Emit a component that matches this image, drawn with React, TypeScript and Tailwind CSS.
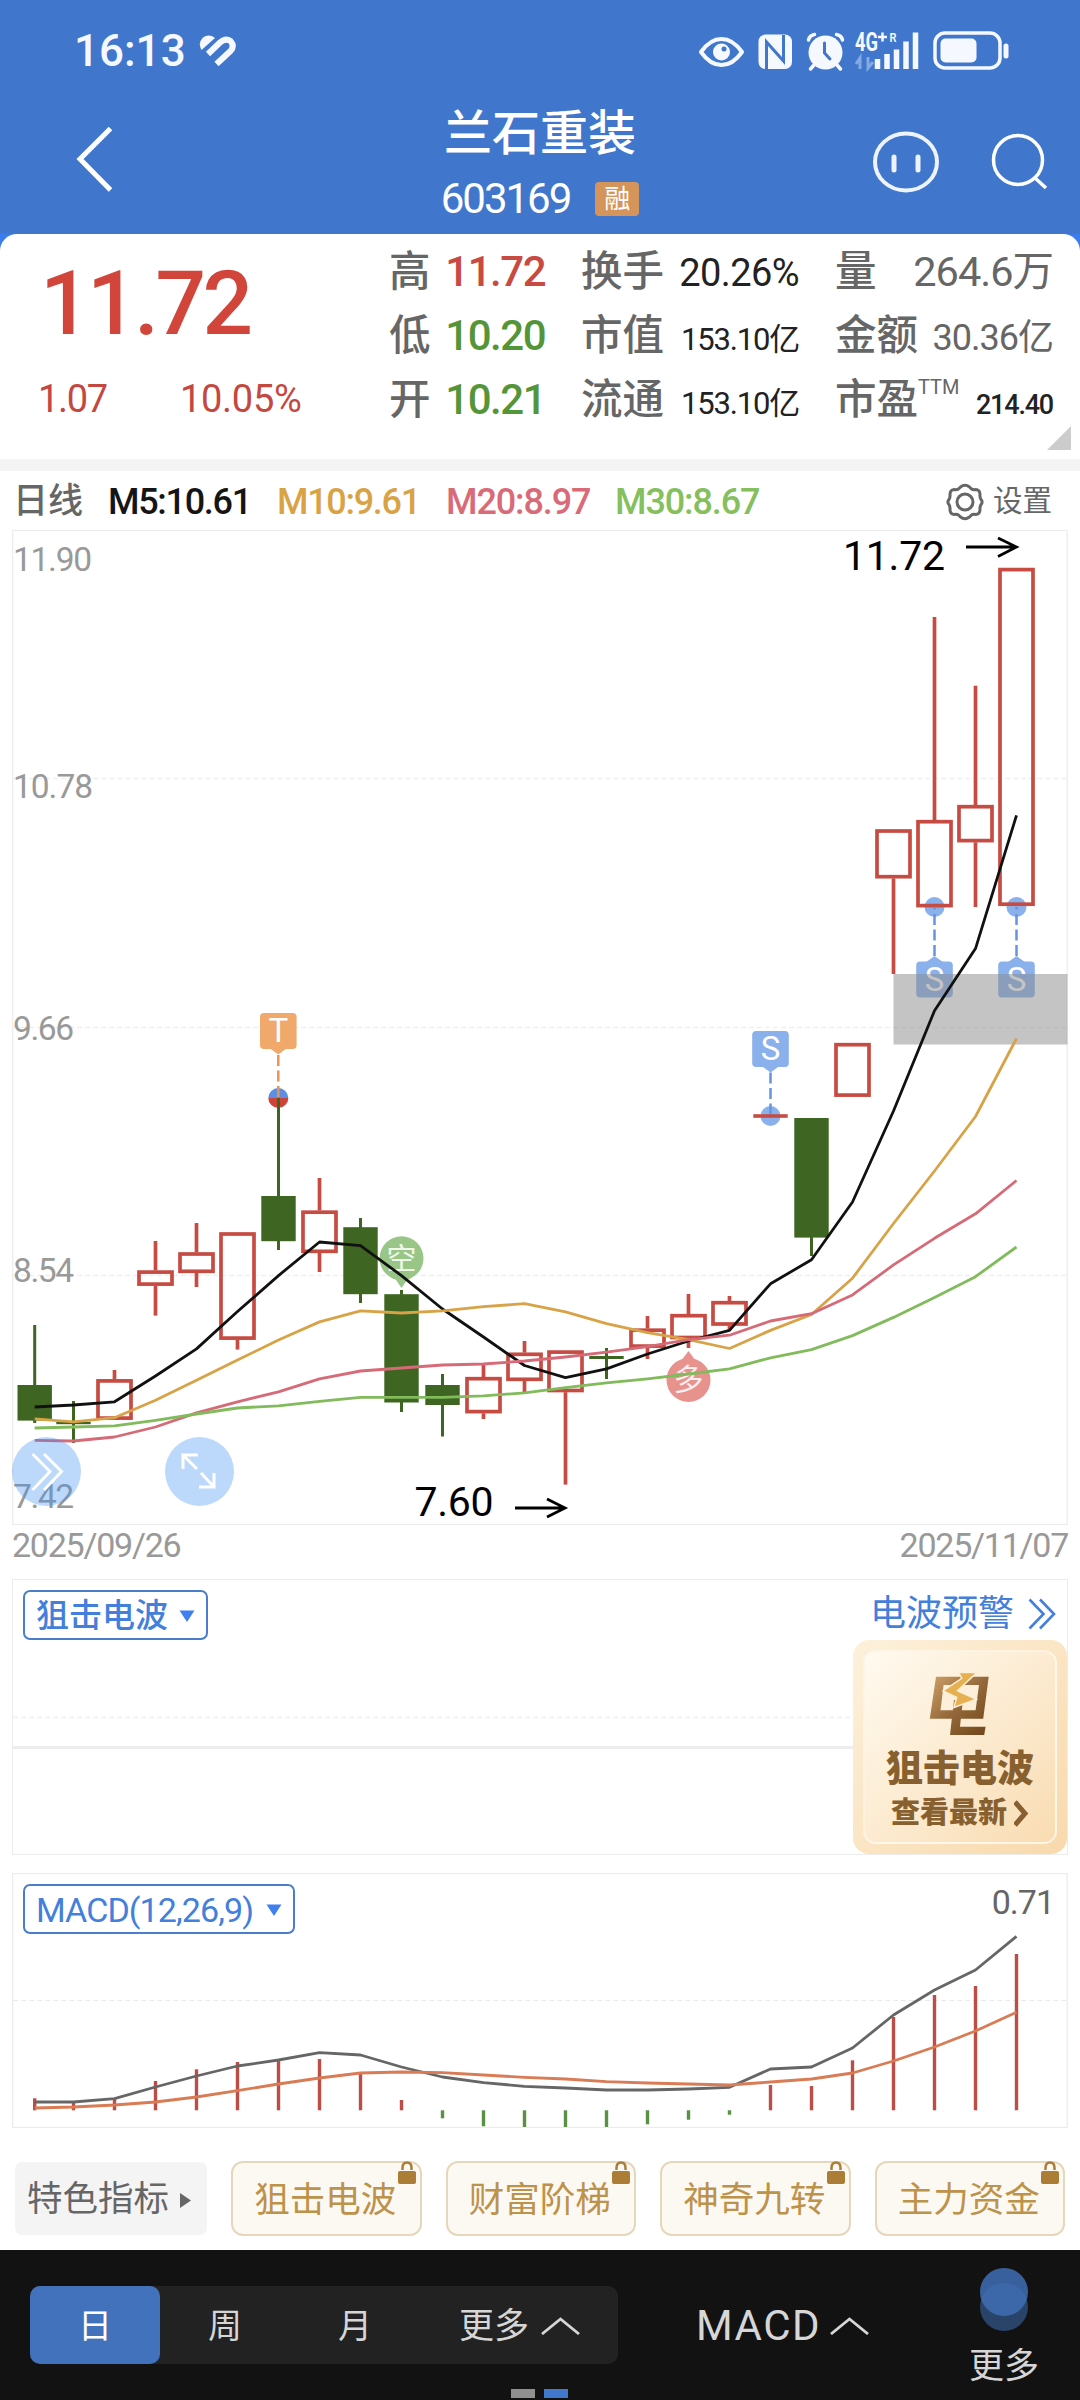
import type { ReactNode } from 'react';

type Candle = {
  up: boolean;
  high: number;
  low: number;
  top: number;
  bottom: number;
};

const RED = '#c64c43';
const GREEN = '#3f6522';

const candles: Candle[] = [
  { up: false, high: 1325, low: 1423, top: 1385, bottom: 1420.6 },
  { up: false, high: 1401, low: 1443, top: 1421.8, bottom: 1424.2 },
  { up: true, high: 1370, low: 1419, top: 1379.2, bottom: 1419.8 },
  { up: true, high: 1241, low: 1315.6, top: 1270.4, bottom: 1285.8 },
  { up: true, high: 1223, low: 1287, top: 1252.3, bottom: 1273 },
  { up: true, high: 1233, low: 1349.6, top: 1232.3, bottom: 1339.8 },
  { up: false, high: 1098, low: 1250, top: 1196, bottom: 1241.2 },
  { up: true, high: 1178, low: 1272, top: 1210.5, bottom: 1253 },
  { up: false, high: 1218, low: 1303, top: 1227.2, bottom: 1294.2 },
  { up: false, high: 1290, low: 1412, top: 1294.2, bottom: 1402.5 },
  { up: false, high: 1374, low: 1436.5, top: 1385, bottom: 1405 },
  { up: true, high: 1365, low: 1419, top: 1377, bottom: 1413.3 },
  { up: true, high: 1341, low: 1392, top: 1352.6, bottom: 1381 },
  { up: true, high: 1352, low: 1484.6, top: 1350.4, bottom: 1392.2 },
  { up: false, high: 1348, low: 1379, top: 1356, bottom: 1359 },
  { up: true, high: 1316, low: 1359, top: 1328.5, bottom: 1347.8 },
  { up: true, high: 1294, low: 1348, top: 1314, bottom: 1339.2 },
  { up: true, high: 1296, low: 1330, top: 1301, bottom: 1325.7 },
  { up: true, high: 1115, low: 1117, top: 1114.2, bottom: 1117.8 },
  { up: false, high: 1118, low: 1256, top: 1118, bottom: 1237.6 },
  { up: true, high: 1044, low: 1096, top: 1043, bottom: 1096.8 },
  { up: true, high: 830, low: 974, top: 829.3, bottom: 878.4 },
  { up: true, high: 617, low: 907, top: 820, bottom: 907.3 },
  { up: true, high: 685.7, low: 907, top: 805, bottom: 842.3 },
  { up: true, high: 568, low: 905, top: 567.9, bottom: 905.9 },
];

const ma5 = [
  1407, 1405, 1401.8, 1376, 1348.9, 1311.5, 1275.6, 1242, 1245.7, 1275.6, 1309, 1337, 1365.5, 1377.7, 1368.9, 1354,
  1341, 1330.4, 1283.8, 1259.7, 1202, 1111, 1010.7, 948.6, 815.4,
];
const ma10 = [
  1418.8, 1421.8, 1417.7, 1400.3, 1380.3, 1360, 1340, 1321.9, 1310.8, 1313, 1310.8, 1306.7, 1303.7, 1311.9, 1323.7,
  1332.6, 1339.6, 1348.5, 1330.4, 1314.5, 1278.2, 1223.5, 1171, 1116.5, 1038.5,
];
const ma20 = [
  1440.3, 1441, 1437, 1427, 1412.9, 1401.8, 1391.8, 1378.8, 1371, 1368, 1365, 1364, 1361, 1357, 1352.2, 1346.7, 1339.6,
  1335.2, 1321, 1313.7, 1294.9, 1264.9, 1238.3, 1213.8, 1180.5,
];
const ma30 = [
  1428, 1427, 1425.8, 1420.3, 1414, 1408, 1405.8, 1401.4, 1397.3, 1397.3, 1397.3, 1395.9, 1392.9, 1387.7, 1382.9,
  1378.8, 1374, 1368.9, 1357.8, 1349.6, 1335.6, 1317.4, 1297.4, 1276.7, 1247,
];

// MACD panel
const ZERO = 2110.3;
const hist = [
  2098.3, 2103, 2099, 2081, 2069.3, 2062, 2060, 2059, 2073.3, 2100, 2118.3, 2126.3, 2127, 2127, 2127, 2124.3, 2119.7,
  2114.7, 2085, 2086, 2060.3, 2017, 1995, 1986, 1954,
];
const dif = [
  2102, 2102, 2098.7, 2087, 2076, 2066, 2060, 2052.7, 2055, 2067, 2077, 2082.7, 2086.3, 2088, 2090, 2090, 2089, 2087.3,
  2069, 2067, 2048, 2015, 1990, 1970, 1936.3,
];
const dea = [
  2108, 2107, 2105, 2102, 2097, 2090.7, 2084, 2078, 2073, 2072, 2072.7, 2075, 2077.3, 2079, 2081.7, 2083, 2084, 2085,
  2082, 2079, 2073, 2061, 2047, 2031, 2012.3,
];

const xAt = (i: number) => (i === 0 ? 34.7 : 73.5 + (i - 1) * 41);
const toPoints = (values: number[]) => values.map((y, i) => `${xAt(i)},${y}`).join(' ');

const StatusIcons = () => (
  <svg width="316" height="62" viewBox="696 20 316 62" fill="none">
    {/* eye */}
    <path d="M701 52C708 42 714 39 721.500 39S735 42 742 52C735 62 729 65 721.500 65S708 62 701 52Z" stroke="#f5f9ff" strokeWidth="4" strokeLinejoin="round" />
    <circle cx="721.500" cy="52" r="8.500" fill="#f5f9ff" />
    <circle cx="724" cy="49" r="2.500" fill="#4077cc" />
    {/* nfc */}
    <rect x="758.500" y="34.500" width="33.500" height="34.500" rx="7" fill="#f5f9ff" />
    <path d="M766.500 69V42L783.500 61V35" stroke="#4077cc" strokeWidth="3" />
    {/* alarm */}
    <circle cx="825.500" cy="52.500" r="17" fill="#f5f9ff" />
    <path d="M808.500 40Q809.500 35.500 814.500 34.500M842.500 40Q841.500 35.500 836.500 34.500M814 65L810.500 69M837 65L840.500 69" stroke="#f5f9ff" strokeWidth="3.500" strokeLinecap="round" />
    <path d="M824.500 43V53L830 59" stroke="#4077cc" strokeWidth="3" strokeLinecap="round" />
    {/* signal */}
    <text x="855" y="50.500" fontSize="25" fontWeight="700" textLength="23" lengthAdjust="spacingAndGlyphs" fill="#f5f9ff">4G</text>
    <path d="M878 37H887M882.500 32.500V41.500" stroke="#f5f9ff" strokeWidth="2.500" />
    <text x="889.500" y="41.500" fontSize="13" fontWeight="600" textLength="7" lengthAdjust="spacingAndGlyphs" fill="#f5f9ff">R</text>
    <path d="M860 69V58L856 64M868 57V68L873 62" stroke="#84a9e3" strokeWidth="3" />
    <path d="M877.500 59V69M887 54V69M896.500 49.500V69M906 41.500V69M915.500 32.500V69" stroke="#f5f9ff" strokeWidth="5.500" />
    {/* battery */}
    <rect x="935" y="33" width="65" height="35" rx="10" stroke="#f5f9ff" strokeWidth="3.500" />
    <rect x="940.500" y="38.500" width="36" height="24" rx="5" fill="#f5f9ff" />
    <path d="M1006 46V56" stroke="#f5f9ff" strokeWidth="5" strokeLinecap="round" />
  </svg>
);

const Header = () => (
  <header className="h-[234px] bg-[#4077cc] text-white">
    <div className="flex h-[102px] items-center justify-between pr-[68px] pl-[74px]">
      <div className="flex items-center gap-[13px]">
        <span className="text-[44px] leading-none font-medium text-[#f5f9ff]">16:13</span>
        <svg width="38" height="32" viewBox="199 35 38 32" fill="none">
          <path d="M201.500 50L215 38Q209 33.500 203 37.500Q197.500 43 201.500 50Z" fill="#f5f9ff" />
          <path d="M208 54L220 42.500Q225.500 37.500 230.500 41Q235 46 230.500 51L216.500 64" stroke="#f5f9ff" strokeWidth="6" strokeLinejoin="round" />
        </svg>
      </div>
      <StatusIcons />
    </div>
    <div className="flex h-[132px] justify-between pr-[32px] pl-[72px]">
      <svg className="mt-[22px]" width="44" height="70" viewBox="0 0 44 70" fill="none" stroke="#fff" strokeWidth="5">
        <path d="M38.500 4.500L8 35L38.500 66" />
      </svg>
      <div className="ml-[92px] flex flex-col items-center">
        <h1 className="mt-[8px] text-[48px] leading-[48px] font-medium">兰石重装</h1>
        <div className="mt-[18px] flex items-center gap-[25px]">
          <span className="text-[42px] leading-[46px] tracking-[-2px]">603169</span>
          <span className="flex h-[34px] w-[44px] items-center justify-center rounded-[4px] bg-[#d4945a] text-[26px] leading-none">融</span>
        </div>
      </div>
      <div className="flex gap-[48px] pt-[26px]">
        <svg width="68" height="68" viewBox="0 0 68 68" fill="none" stroke="#eef4ff" strokeWidth="4">
          <ellipse cx="34" cy="34" rx="31" ry="28.500" />
          <path d="M22 29V42M46 29V42" strokeWidth="5" strokeLinecap="round" />
        </svg>
        <svg width="60" height="68" viewBox="0 0 60 68" fill="none" stroke="#fff" strokeWidth="3.500">
          <circle cx="30" cy="32" r="24.500" />
          <path d="M47 50L58 60" />
        </svg>
      </div>
    </div>
  </header>
);

const Field = ({ label, children }: { label: ReactNode; children: ReactNode }) => (
  <div className="flex h-16 items-baseline justify-between whitespace-nowrap">
    <span className="text-[41.500px] leading-[64px] font-medium text-[#666]">{label}</span>
    {children}
  </div>
);

const Quote = () => (
  <section className="bg-[#3b7ded]">
    <div className="flex h-[225px] rounded-t-[17px] bg-white">
      <div className="w-[389px] pl-[38px]">
        <div className="mt-[20px] pl-[2px] text-[89px] leading-[100px] font-medium tracking-[-3.500px] text-[#d1453b]">11.72</div>
        <div className="mt-[23px] flex text-[38px] leading-[44px] text-[#c4483f]">
          <span className="w-[142px] tracking-[-1.300px]">1.07</span>
          <span className="tracking-[-0.300px]">10.05%</span>
        </div>
      </div>
      <div className="grid grid-cols-[156px_218px_218px] gap-x-[36px] self-start pt-[6px]">
        <div>
          <Field label="高"><span className="text-[42px] font-medium tracking-[-1.500px] text-[#c94a41]">11.72</span></Field>
          <Field label="低"><span className="text-[42px] font-medium tracking-[-1.500px] text-[#559539]">10.20</span></Field>
          <Field label="开"><span className="text-[42px] font-medium tracking-[-1.500px] text-[#559539]">10.21</span></Field>
        </div>
        <div>
          <Field label="换手"><span className="text-[38px] tracking-[-0.600px] text-[#222]">20.26%</span></Field>
          <Field label="市值"><span className="text-[31px] tracking-[-1.200px] text-[#222]">153.10亿</span></Field>
          <Field label="流通"><span className="text-[31px] tracking-[-1.200px] text-[#222]">153.10亿</span></Field>
        </div>
        <div>
          <Field label="量"><span className="text-[41.500px] tracking-[-1px] text-[#666]">264.6万</span></Field>
          <Field label="金额"><span className="text-[36px] tracking-[-1px] text-[#666]">30.36亿</span></Field>
          <Field label={<>市盈<span className="relative -top-5 text-[20px] font-normal">TTM</span></>}>
            <span className="text-[27px] font-medium tracking-[-1.200px] text-[#222]">214.40</span>
          </Field>
        </div>
      </div>
      <svg className="-ml-[6px] self-end pb-[9px]" width="24" height="33" viewBox="0 0 24 24">
        <path d="M24 0V24H0Z" fill="#ccc" />
      </svg>
    </div>
    <div className="h-3 bg-[#f4f4f4]" />
  </section>
);

const MaRow = () => (
  <div className="flex h-[59px] items-center bg-white pt-[2px] pr-[28px] pl-[13px] text-[36px] leading-none font-medium whitespace-nowrap">
    <span className="w-[95px] text-[35px] text-[#666]">日线</span>
    <span className="w-[169px] tracking-[-1.300px] text-[#151515]">M5:10.61</span>
    <span className="w-[169px] tracking-[-1.300px] text-[#d9a345]">M10:9.61</span>
    <span className="w-[169px] tracking-[-1.100px] text-[#d96b78]">M20:8.97</span>
    <span className="tracking-[-1.100px] text-[#85bf5e]">M30:8.67</span>
    <svg className="ml-auto" width="38" height="38" viewBox="0 0 38 38" fill="none" stroke="#666" strokeWidth="3" strokeLinejoin="round">
      <path d="M14.500 4Q19 0.500 23.500 4L25.500 6Q27 7 30 6.500Q34 7 34 11.500Q33.500 15 36 18V20Q33.500 23 34 26.500Q34 31 30 31.500Q27 31 25.500 32L23.500 34Q19 37.500 14.500 34L12.500 32Q11 31 8 31.500Q4 31 4 26.500Q4.500 23 2 20V18Q4.500 15 4 11.500Q4 7 8 6.500Q11 7 12.500 6Z" />
      <circle cx="19" cy="19" r="8" />
    </svg>
    <span className="ml-[9px] text-[29.500px] font-normal text-[#666]">设置</span>
  </div>
);

const Flag = ({ x, y, text, color, up }: { x: number; y: number; text: string; color: string; up?: boolean }) => (
  <g>
    <path d={up ? `M${x - 9} ${y + 1}L${x} ${y - 5.500}L${x + 9} ${y + 1}Z` : `M${x - 9} ${y + 35}L${x} ${y + 41.500}L${x + 9} ${y + 35}Z`} fill={color} />
    <rect x={x - 18.300} y={y} width="36.600" height="36" rx="4" fill={color} />
    <text x={x} y={y + 29} fontSize="33" textAnchor="middle" fill="#fff">{text}</text>
  </g>
);

const KLineChart = () => (
  <svg className="block" width="1080" height="995" viewBox="0 530 1080 995" fill="none">
    <rect x="12.700" y="530.500" width="1054.500" height="994" stroke="#ececec" strokeWidth="1.200" />
    <g stroke="#efefef" strokeWidth="1.500" strokeDasharray="5 3">
      <path d="M13 778.500H1067" />
      <path d="M13 1027.500H1067" />
      <path d="M13 1275.500H1067" />
    </g>

    <g fontSize="33.500" fill="#999">
      <text x="13" y="571" textLength="79">11.90</text>
      <text x="13" y="798" textLength="80">10.78</text>
      <text x="13" y="1040" textLength="61">9.66</text>
      <text x="13" y="1282" textLength="61">8.54</text>
      <text x="13" y="1508" textLength="61">7.42</text>
    </g>

    {/* long / short hints */}
    <path d="M394 1277L401.500 1288L409 1277Z" fill="#99c687" />
    <circle cx="401.500" cy="1258.300" r="22" fill="#99c687" />
    <text x="401.500" y="1268.500" fontSize="30" textAnchor="middle" fill="#eef7ea">空</text>
    <path d="M681 1361L688.500 1351L696 1361Z" fill="#e8928e" />
    <circle cx="688.500" cy="1380" r="22" fill="#e8928e" />
    <text x="688.500" y="1390" fontSize="30" textAnchor="middle" fill="#fdeeee">多</text>

    {/* T and S points */}
    <path d="M268.300 1098A10 10 0 0 1 288.300 1098Z" fill="#5b8fe3" />
    <path d="M268.300 1098A10 10 0 0 0 288.300 1098Z" fill="#cf4439" />
    <circle cx="770.500" cy="1116" r="10" fill="#8bb1ec" />
    <circle cx="934.500" cy="907" r="10" fill="#8bb1ec" />
    <circle cx="1016.500" cy="907" r="10" fill="#8bb1ec" />
    <Flag x={278.300} y={1013} text="T" color="#f0a96b" />
    <Flag x={770.500} y={1031} text="S" color="#8bb1ec" />
    <Flag x={934.500} y={961.500} text="S" color="#8bb1ec" up />
    <Flag x={1016.500} y={961.500} text="S" color="#8bb1ec" up />

    <rect x="893.500" y="974" width="174" height="70.500" fill="#898989" fillOpacity="0.500" />

    {candles.map((c, i) => {
      const x = xAt(i);
      if (!c.up) {
        return (
          <g key={i}>
            <path d={`M${x} ${c.high}V${c.low}`} stroke={GREEN} strokeWidth="3" />
            <rect x={x - 17.200} y={c.top} width="34.400" height={c.bottom - c.top} fill={GREEN} />
          </g>
        );
      }
      if (c.bottom - c.top < 5) {
        return <rect key={i} x={x - 17.200} y={c.top} width="34.400" height={c.bottom - c.top} fill={RED} />;
      }
      return (
        <g key={i} stroke={RED} strokeWidth="3.700">
          {c.high < c.top && <path d={`M${x} ${c.high}V${c.top}`} />}
          {c.low > c.bottom && <path d={`M${x} ${c.bottom}V${c.low}`} />}
          <rect x={x - 16.500} y={c.top + 1.700} width="33" height={c.bottom - c.top - 3.400} />
        </g>
      );
    })}

    <path d="M278.300 1055V1098" stroke="#e69557" strokeWidth="2.500" strokeDasharray="11 4.500" />
    <g stroke="#6594e0" strokeWidth="2.500" strokeDasharray="11 4.500">
      <path d="M770.500 1072.500V1114" />
      <path d="M934.500 956V907" />
      <path d="M1016.500 956V907" />
    </g>

    <g strokeWidth="2.800" strokeLinejoin="round">
      <polyline points={toPoints(ma5)} stroke="#111" />
      <polyline points={toPoints(ma10)} stroke="#d8a347" />
      <polyline points={toPoints(ma20)} stroke="#d66a76" />
      <polyline points={toPoints(ma30)} stroke="#82bb5c" />
    </g>

    {/* highest and lowest price */}
    <g fontSize="41" fill="#000">
      <text x="843" y="569.500" textLength="102">11.72</text>
      <text x="414.500" y="1516" textLength="79">7.60</text>
    </g>
    <g stroke="#000" strokeWidth="2.800">
      <path d="M966 547H1016M998 538L1016.500 547L998 556.500" />
      <path d="M515 1508H565M547 1499L565 1508L547 1517" />
    </g>

    {/* floating buttons */}
    <circle cx="46.500" cy="1471.500" r="34.500" fill="#408ff4" fillOpacity="0.350" />
    <path d="M32.500 1454L50 1471.500L32.500 1490M44 1454L61.500 1471.500L44 1490" stroke="#fff" strokeWidth="3" />
    <circle cx="199.500" cy="1471.500" r="34.500" fill="#408ff4" fillOpacity="0.350" />
    <path d="M198 1455H183V1469M183 1455L197 1469M199 1487H214V1473M214 1487L201 1473" stroke="#fff" strokeWidth="3" />
  </svg>
);

const SelectTag = ({ children, className }: { children: ReactNode; className: string }) => (
  <button className={`flex h-[50px] items-center justify-between rounded-[7px] border-2 border-[#4a7dcc] bg-white pr-[11px] pl-[11px] leading-none text-[#437fdb] ${className}`}>
    {children}
    <svg width="16" height="12" viewBox="0 0 16 12">
      <path d="M0.500 0.500H15.500L8 12Z" fill="#3f7ff0" />
    </svg>
  </button>
);

const PromoLogo = () => (
  <svg width="62" height="64" viewBox="929 1672 62 64">
    <defs>
      <linearGradient id="brown" x1="0" y1="0" x2="1" y2="1">
        <stop offset="0" stopColor="#cfa066" />
        <stop offset="0.500" stopColor="#94683a" />
        <stop offset="1" stopColor="#6e4519" />
      </linearGradient>
    </defs>
    <path
      fill="url(#brown)"
      fillRule="evenodd"
      d="M936 1676.700H988.700L983.200 1718.700H960.800L960 1726.700H985.600L984.200 1735H950L951.800 1718.700H929.800ZM943.600 1685L940.500 1710.300H952.800L954 1700H963L961.800 1710.300H975.600L979 1685Z"
    />
    <path
      fill="#e6b050"
      stroke="#fbeed8"
      strokeWidth="1.500"
      d="M958.700 1672.500H977L957.400 1690.700L976.500 1699.300L953.900 1707.500L956.700 1697.300L943 1691L961.800 1678.300Z"
    />
  </svg>
);

const WavePanel = () => (
  <section className="mx-3 flex h-[276px] justify-between border border-[#ececec] bg-white">
    <div className="flex flex-1 flex-col">
      <div className="h-[136px] pt-[10px] pl-[10px]">
        <SelectTag className="w-[185px] pt-px text-[33px] font-medium">狙击电波</SelectTag>
      </div>
      <svg className="block" width="840" height="36" viewBox="0 0 840 36">
        <path d="M0 1.500H840" stroke="#f3f3f3" strokeWidth="2" strokeDasharray="5 3" />
        <path d="M0 31.500H840" stroke="#ededed" strokeWidth="3" />
      </svg>
    </div>
    <div className="w-[215px]">
      <div className="flex h-[60px] items-center justify-between pt-[8px] pr-[11px] pl-[17px] text-[36px] leading-none text-[#437fdb]">
        电波预警
        <svg width="28" height="32" viewBox="0 0 28 32" fill="none" stroke="#437fdb" strokeWidth="2.600">
          <path d="M1.500 1.500L15.500 16L1.500 30.500M12 1.500L26 16L12 30.500" />
        </svg>
      </div>
      <div className="h-[214px] rounded-[16px] bg-linear-to-br from-[#fdf1dc] to-[#f8d9ac] p-[10px]">
        <div className="flex h-full flex-col items-center rounded-[13px] border-2 border-[#fff8ea]/80 bg-linear-to-br from-[#fffaf0] to-[#f9dcb2] pt-[20px] text-[#88602f]">
          <PromoLogo />
          <div className="mt-[12px] text-[37px] leading-[44px] font-black">狙击电波</div>
          <div className="mt-[4px] flex items-center gap-[7px] text-[29px] leading-[34px] font-black">
            查看最新
            <svg width="15" height="27" viewBox="0 0 15 27" fill="none" stroke="#88602f" strokeWidth="5">
              <path d="M1 2L11 13.500L1 25" />
            </svg>
          </div>
        </div>
      </div>
    </div>
  </section>
);

const MacdPanel = () => (
  <section className="mt-[18px] grid h-[255px]">
    <svg className="col-start-1 row-start-1" width="1080" height="255" viewBox="0 1873 1080 255" fill="none">
      <rect x="12.700" y="1873.500" width="1054.500" height="254" stroke="#ececec" strokeWidth="1.200" />
      <path d="M13 2000.500H1067" stroke="#eaeaea" strokeDasharray="5 3" />
      {hist.map((y, i) => (
        <path key={i} d={`M${xAt(i)} ${ZERO}V${y}`} stroke={y < ZERO ? '#bd4d47' : '#5a9144'} strokeWidth="3.400" />
      ))}
      <g strokeWidth="2.800" strokeLinejoin="round">
        <polyline points={toPoints(dif)} stroke="#666" />
        <polyline points={toPoints(dea)} stroke="#d97b54" />
      </g>
    </svg>
    <div className="col-start-1 row-start-1 flex items-start justify-between pt-[11px] pr-[26px] pl-[23px]">
      <SelectTag className="w-[272px] pt-[2px] text-[34px] tracking-[-0.900px]">MACD(12,26,9)</SelectTag>
      <span className="text-[34px] leading-[37px] tracking-[-1px] text-[#666]">0.71</span>
    </div>
  </section>
);

const chips = ['狙击电波', '财富阶梯', '神奇九转', '主力资金'];

const Indicators = () => (
  <section className="flex h-[122px] items-start gap-6 bg-white pt-[33px] pr-[15px] pl-[15px] text-[35.500px] leading-none whitespace-nowrap">
    <button className="mt-px flex h-[73px] w-[192px] items-center gap-[11px] rounded-[7px] bg-[#f4f4f4] pt-[3px] pl-[12px] text-[#666]">
      特色指标
      <svg width="11" height="15" viewBox="0 0 11 15">
        <path d="M0 0L11 7.500L0 15Z" fill="#666" />
      </svg>
    </button>
    {chips.map((name) => (
      <button key={name} className="relative h-[75px] flex-1 rounded-[12px] border-2 border-[#e5d7bb] bg-[#fcf8f2] pt-[4px] pr-[2px] text-[#bd924a]">
        {name}
        <svg className="absolute -top-[2px] right-[4px]" width="18" height="23" viewBox="0 0 18 23">
          <path d="M4.500 9V7Q4.500 1.500 9 1.500T13.500 7V9" fill="none" stroke="#ab7d37" strokeWidth="2.500" />
          <rect y="10" width="18" height="13" rx="2" fill="#ab7d37" />
        </svg>
      </button>
    ))}
  </section>
);

const Caret = () => (
  <svg width="39" height="18" viewBox="0 0 39 18" fill="none" stroke="#d6d6d6" strokeWidth="2.800">
    <path d="M1 17L19.500 2L38 17" />
  </svg>
);

const BottomBar = () => (
  <footer className="flex h-[150px] bg-[#121212] pl-[30px] text-[34px] leading-none text-[#d6d6d6]">
    <div className="mt-[36px] flex h-[78px] w-[588px] rounded-[10px] bg-[#222]">
      <button className="w-[130px] rounded-[10px] bg-[#4272bb] pt-[2px] text-white">日</button>
      <button className="w-[130px] pt-[2px]">周</button>
      <button className="w-[130px] pt-[2px]">月</button>
      <button className="ml-[39px] flex items-center gap-[12px] pt-[2px] text-[35px]">
        更多
        <Caret />
      </button>
    </div>
    <button className="mt-[36px] ml-[78px] flex h-[78px] items-center gap-[9px] pt-[2px] text-[42px] tracking-[1.500px]">
      MACD
      <Caret />
    </button>
    <div className="ml-auto flex w-[152px] flex-col items-center pt-[18px] text-[35px]">
      <svg width="48" height="63" viewBox="0 0 48 63">
        <circle cx="24" cy="39" r="24" fill="#2a4368" />
        <circle cx="24" cy="24" r="24" fill="#3f6eb5" fillOpacity="0.850" />
      </svg>
      <span className="mt-[18px]">更多</span>
    </div>
    <div className="absolute top-[2389px] left-[511px] flex gap-[9px]">
      <span className="h-[9px] w-[24px] bg-[#909090]" />
      <span className="h-[9px] w-[24px] bg-[#4079cc]" />
    </div>
  </footer>
);

export default function App() {
  return (
    <div className="relative h-[2400px] w-[1080px] overflow-hidden bg-white font-[Roboto,'Noto_Sans_CJK_SC',sans-serif]">
      <Header />
      <Quote />
      <MaRow />
      <KLineChart />
      <div className="flex h-[54px] items-center justify-between px-[12px] pb-[14px] text-[34px] leading-none tracking-[-1.250px] text-[#999]">
        <span>2025/09/26</span>
        <span>2025/11/07</span>
      </div>
      <WavePanel />
      <MacdPanel />
      <Indicators />
      <BottomBar />
    </div>
  );
}
